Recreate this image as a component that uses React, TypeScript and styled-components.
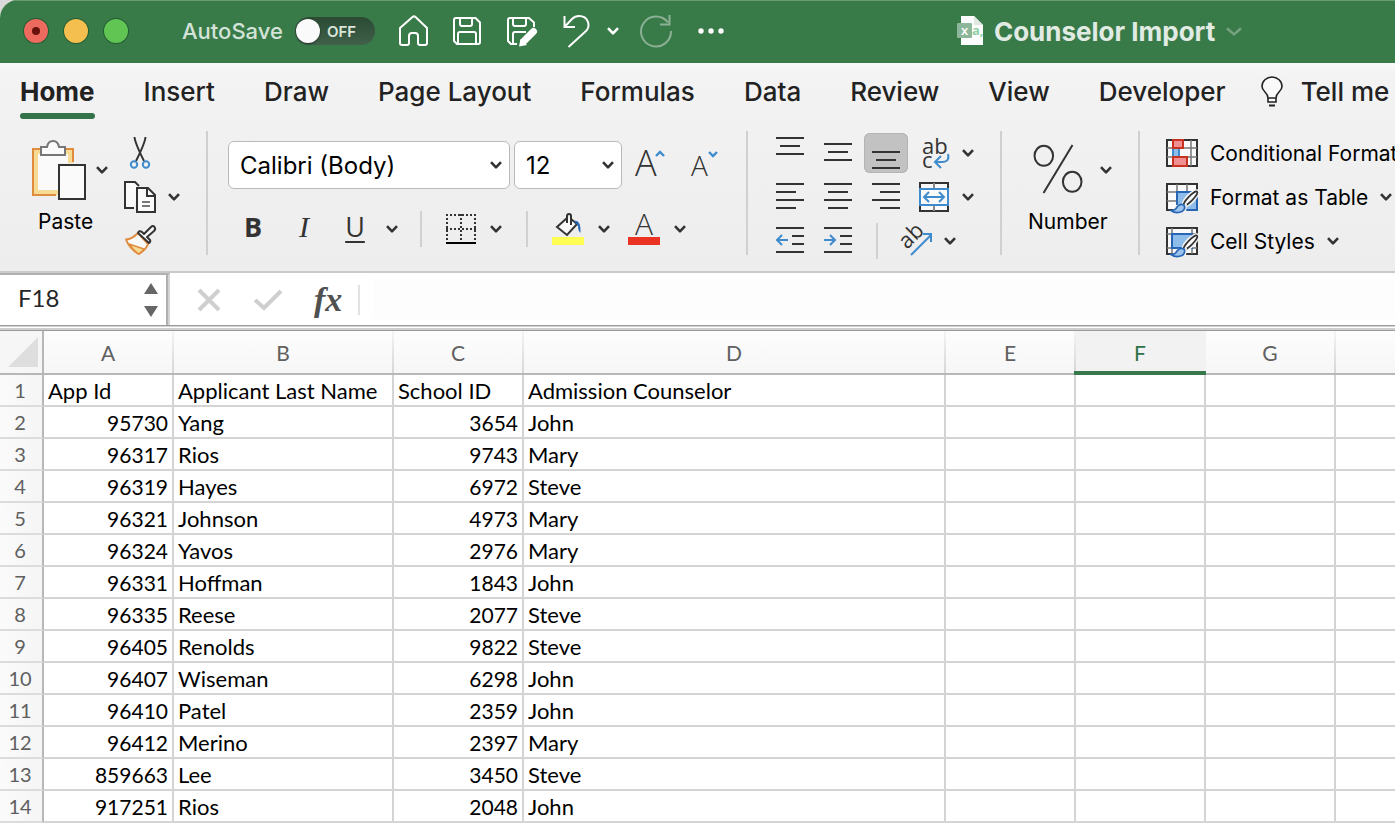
import React from "react";
import styled, { createGlobalStyle, css } from "styled-components";

const ui = `Inter, "Liberation Sans", sans-serif`;
const sheet = `Lato, "Open Sans", sans-serif`;
const ink = "#333333";
const blue = "#3e8bcd";

const GlobalStyle = createGlobalStyle`
  * { box-sizing: border-box; }
  body { margin: 0; background: #d9d9d9; font-family: ${ui}; color: #222; overflow: hidden; }
  button { border: 0; padding: 0; margin: 0; background: none; font: inherit; color: inherit; }
  svg { display: block; flex: none; overflow: visible; }
`;

const Window = styled.div`
  min-height: 100vh;
  background: #fff;
  border-top-left-radius: 18px;
  overflow: hidden;
`;

/* Title bar */
const TitleBar = styled.header`
  display: flex;
  align-items: center;
  height: 63px;
  padding: 0 0 2px 24px;
  background: #397a49;
  border-top: 1px solid #6a9b75;
  color: #fff;
  white-space: nowrap;
`;
const Lights = styled.div`
  display: flex;
  gap: 16px;
  margin-right: 54px;
`;
const Light = styled.button<{ $color: string }>`
  display: grid;
  place-items: center;
  width: 24px;
  height: 24px;
  border-radius: 50%;
  background: ${(p) => p.$color};
  box-shadow: 0 0 0 1px rgba(20, 70, 35, 0.55);
`;
const UnsavedDot = styled.span`
  width: 8px;
  height: 8px;
  border-radius: 50%;
  background: #69120d;
`;
const AutoSave = styled.label`
  display: flex;
  align-items: center;
  gap: 12px;
  margin-right: 24px;
  font-size: 22px;
  font-weight: 500;
  color: #d3e3d7;
`;
const Switch = styled.span`
  position: relative;
  display: flex;
  align-items: center;
  width: 80px;
  height: 28px;
  padding-left: 32px;
  border-radius: 14px;
  background: linear-gradient(#2b4a34, #40604a);
  font-size: 15px;
  font-weight: 600;
  color: #dbe6dd;
`;
const SwitchInput = styled.input`
  position: absolute;
  inset: 0;
  width: 100%;
  height: 100%;
  margin: 0;
  opacity: 0;
`;
const Knob = styled.span`
  position: absolute;
  left: 1px;
  top: 2px;
  width: 24px;
  height: 24px;
  border-radius: 50%;
  background: #fafafa;
  box-shadow: 0 1px 2px rgba(0, 0, 0, 0.5);
`;
const QuickTools = styled.div`
  display: flex;
  align-items: center;
  gap: 24px;
`;
const ToolButton = styled.button`
  display: flex;
  align-items: center;
  justify-content: center;
`;
const UndoSplit = styled.div`
  display: flex;
  align-items: center;
  gap: 16px;
  margin-right: -4px;
`;
const DocTitle = styled.div`
  display: flex;
  align-items: center;
  gap: 11px;
  margin-left: 232px;
  font-size: 26px;
  font-weight: 700;
  color: #e1ebe3;
`;

/* Ribbon */
const RibbonArea = styled.section`
  height: 210px;
  background: linear-gradient(#f8f8f8, #f3f3f3 10px, #ededed);
  border-bottom: 2px solid #c9c9c9;
  overflow: hidden;
`;
const Tabs = styled.nav`
  display: flex;
  align-items: flex-start;
  height: 68px;
  padding: 11px 0 0 20px;
  gap: 48px;
  white-space: nowrap;
`;
const Tab = styled.button<{ $active?: boolean }>`
  height: 45px;
  flex: none;
  padding: 0 1px 0 0;
  font-size: 26px;
  line-height: 36px;
  font-weight: ${(p) => (p.$active ? 700 : 500)};
  display: flex;
  flex-direction: column;
  gap: 3px;
  &::after {
    content: "";
    width: 100%;
    height: 6px;
    border-radius: 3px;
    background: ${(p) => (p.$active ? "#33734a" : "transparent")};
  }
`;
const TellMe = styled.button`
  display: flex;
  flex: none;
  align-items: center;
  gap: 18px;
  margin-left: -14px;
  font-size: 26px;
  line-height: 36px;
  font-weight: 500;
`;
const Ribbon = styled.div`
  display: flex;
  align-items: flex-start;
  height: 132px;
  white-space: nowrap;
  font-size: 21px;
  color: #000;
`;
const Divider = styled.div<{ $small?: boolean }>`
  flex: none;
  width: 2px;
  height: ${(p) => (p.$small ? 36 : 124)}px;
  background: #d0d0d0;
`;
const Group = styled.div<{ $left: number; $right: number }>`
  flex: none;
  display: flex;
  padding: 0 ${(p) => p.$right}px 0 ${(p) => p.$left}px;
`;
const Rows = styled.div`
  display: flex;
  flex-direction: column;
  gap: 4px;
  padding-top: 2px;
`;
const Row = styled.div`
  display: flex;
  align-items: center;
  gap: 4px;
  height: 40px;
`;
const BigButton = styled.button<{ $width: number }>`
  display: flex;
  flex-direction: column;
  align-items: flex-start;
  width: ${(p) => p.$width}px;
  line-height: 26px;
`;
const BigTop = styled.span<{ $gap: number; $indent?: number }>`
  display: flex;
  align-items: center;
  gap: ${(p) => p.$gap}px;
  height: 78px;
  padding-left: ${(p) => p.$indent ?? 0}px;
`;
const BigLabel = styled.span<{ $indent?: number }>`
  padding-left: ${(p) => p.$indent ?? 0}px;
`;
const IconButton = styled.button<{ $on?: boolean }>`
  display: grid;
  place-items: center;
  width: 44px;
  height: 40px;
  border-radius: 6px;
  ${(p) =>
    p.$on &&
    css`
      background: #c2c2c2;
      box-shadow: inset 0 0 0 1px #b4b4b4;
    `}
`;
const ArrowButton = styled.button`
  display: grid;
  place-items: center;
  width: 16px;
  height: 40px;
`;
const FontGroup = styled.div`
  display: flex;
  flex: none;
  flex-direction: column;
  gap: 22px;
  width: 538px;
  padding: 10px 0 0 20px;
`;
const FontRow = styled.div`
  display: flex;
  align-items: center;
  gap: 4px;
`;
const SelectWrap = styled.label<{ $width: number }>`
  display: grid;
  align-items: center;
  width: ${(p) => p.$width}px;
  height: 48px;
  & > * { grid-area: 1 / 1; }
  & > svg { justify-self: end; margin-right: 8px; pointer-events: none; }
`;
const Select = styled.select`
  appearance: none;
  width: 100%;
  height: 48px;
  padding: 0 11px;
  border: 1px solid #b9b9b9;
  border-radius: 6px;
  background: #fff;
  font-family: ${ui};
  font-size: 24px;
  color: #000;
`;
const GrowButtons = styled.div`
  display: flex;
  gap: 24px;
  margin-left: 8px;
`;
const FormatRow = styled.div`
  display: flex;
  align-items: center;
  height: 36px;
`;
const Letter = styled.button<{ $kind: "b" | "i" | "u" }>`
  width: 52px;
  height: 36px;
  padding-bottom: 4px;
  font-family: "Open Sans", sans-serif;
  font-size: 27px;
  line-height: 32px;
  color: ${ink};
  ${(p) => p.$kind === "b" && css`font-weight: 700; width: 50px;`}
  ${(p) => p.$kind === "i" && css`font-family: "Liberation Serif", serif; font-style: italic; font-size: 30px;`}
  ${(p) => p.$kind === "u" && css`text-decoration: underline; text-decoration-thickness: 2px; text-underline-offset: 4px; width: 50px;`}
`;
const FormatSplit = styled.div<{ $left: number; $gap?: number }>`
  display: flex;
  align-items: center;
  gap: ${(p) => p.$gap ?? 12}px;
  margin-left: ${(p) => p.$left}px;
`;
const StyleButton = styled.button`
  display: flex;
  align-items: center;
  gap: 12px;
  height: 40px;
`;

/* Formula bar */
const FormulaBar = styled.div`
  display: flex;
  height: 52px;
  background: #fff;
`;
const NameBox = styled.div`
  display: flex;
  align-items: center;
  width: 170px;
  height: 52px;
  border-top: 2px solid #b0b0b0;
  border-right: 2px solid #d4d4d4;
  box-shadow: inset -2px 0 0 #b0b0b0;
`;
const NameInput = styled.input`
  width: 144px;
  padding: 0 0 6px 18px;
  border: 0;
  outline: 0;
  background: transparent;
  font-family: ${sheet};
  font-size: 24px;
  color: #262626;
`;
const FormulaTools = styled.div`
  display: flex;
  align-items: center;
  gap: 31px;
  padding: 2px 0 0 26px;
`;
const Fx = styled.button`
  font-family: "Liberation Serif", serif;
  font-style: italic;
  font-weight: 700;
  font-size: 34px;
  line-height: 40px;
  color: #505050;
`;
const FormulaEdge = styled.div`
  width: 2px;
  height: 30px;
  margin: 12px 13px 0 16px;
  background: #e2e2e2;
`;
const FormulaInput = styled.input`
  flex: 1;
  min-width: 0;
  margin: 6px 0;
  border: 0;
  outline: 0;
  background: #fdfdfd;
  font-family: ${sheet};
  font-size: 24px;
`;
const Splitter = styled.div`
  height: 6px;
  border-top: 1px solid #9b9b9b;
  border-bottom: 1px solid #9b9b9b;
  background: linear-gradient(#d4d4d4 1px, #fff 1px, #fff 2px, #cfcfcf 2px);
`;

/* Grid */
const Grid = styled.table`
  width: 100%;
  table-layout: fixed;
  border-collapse: separate;
  border-spacing: 0;
  font-family: ${sheet};
  font-size: 22px;
  line-height: 28px;
  color: #000;
`;
const Col = styled.col<{ $width?: number }>`
  width: ${(p) => (p.$width ? `${p.$width}px` : "auto")};
`;
const Corner = styled.td`
  height: 44px;
  padding: 0 4px 0 8px;
  border-right: 2px solid #b7b7b7;
  border-bottom: 2px solid #b7b7b7;
  background: #f6f6f6;
`;
const ColHead = styled.th<{ $active?: boolean }>`
  position: relative;
  height: 44px;
  padding: 0 2px 0 0;
  font-size: 21px;
  font-weight: 400;
  color: #606060;
  background:
    linear-gradient(#b7b7b7, #b7b7b7) bottom / 100% 2px no-repeat,
    linear-gradient(#f4f4f4, #d4d4d4) right / 2px 100% no-repeat,
    linear-gradient(#fdfdfd, #f6f6f6);
  &:last-child {
    background:
      linear-gradient(#b7b7b7, #b7b7b7) bottom / 100% 2px no-repeat,
      linear-gradient(#fdfdfd, #f6f6f6);
  }
  ${(p) =>
    p.$active &&
    css`
      color: #2f7147;
      background: #f2f2f2;
      &::after {
        content: "";
        position: absolute;
        left: -2px;
        right: 0;
        bottom: 0;
        height: 4px;
        background: #38764c;
      }
    `}
`;
const RowHead = styled.th`
  height: 32px;
  padding: 0 2px 0 0;
  font-size: 20px;
  font-weight: 400;
  color: #606060;
  background: linear-gradient(90deg, #fbfbfb, #f5f5f5);
  border-right: 2px solid #b7b7b7;
  border-bottom: 2px solid #dcdcdc;
`;
const Cell = styled.td<{ $num?: boolean }>`
  height: 32px;
  padding: 2px 4px 0;
  font-size: ${(p) => (p.$num ? 21 : 22)}px;
  text-align: ${(p) => (p.$num ? "right" : "left")};
  border-right: 2px solid #d4d4d4;
  border-bottom: 2px solid #d4d4d4;
  background: #fff;
  white-space: nowrap;
  &:last-child { border-right: 0; }
`;

const Chevron = ({ color = ink, w = 12, h = 8, sw = 2.6 }) => (
  <svg width={w} height={h} viewBox={`0 0 ${w} ${h}`} fill="none" stroke={color} strokeWidth={sw}>
    <path d={`M1 1.2L${w / 2} ${h - 1.6}L${w - 1} 1.2`} strokeLinejoin="round" />
  </svg>
);

type Line = [number, number, number];
const Lines = ({ lines, arrow }: { lines: Line[]; arrow?: "left" | "right" }) => (
  <svg width="44" height="40" fill="none" stroke={ink} strokeWidth="2">
    {lines.map(([x1, x2, y]) => (
      <path key={y} d={`M${x1} ${y}H${x2}`} />
    ))}
    {arrow === "left" && <path d="M20 19H9M14 14L9 19L14 24" stroke={blue} />}
    {arrow === "right" && <path d="M8 19H19M14 14L19 19L14 24" stroke={blue} />}
  </svg>
);

const HomeIcon = () => (
  <svg width="30" height="32" viewBox="0 0 30 32" fill="none" stroke="#fff" strokeWidth="2" strokeLinejoin="round">
    <path d="M1 13L13.500 2Q15 0.800 16.500 2L28 13V28Q28 30 26 30H21Q19 30 19 28V21Q19 18 16 18H13Q10 18 10 21V28Q10 30 8 30H3Q1 30 1 28Z" />
  </svg>
);
const SaveIcon = ({ edit = false }) => (
  <svg width={edit ? 32 : 30} height="32" viewBox={edit ? "0 0 32 32" : "0 0 30 32"} fill="none" stroke="#fff" strokeWidth="2" strokeLinejoin="round">
    {edit ? (
      <>
        <path d="M10 29H4L1 26V5Q1 3 3 3H22L27 7.500V12" />
        <path d="M6 3V9Q6 11 8 11H17Q19 11 19 9V3M6 29V19Q6 17 8 17H19" />
        <path d="M17 26L26.500 16.500" strokeWidth="7" strokeLinecap="round" />
        <path d="M12 31.500L13.500 24L20 30Z" fill="#fff" stroke="none" />
      </>
    ) : (
      <>
        <path d="M3 3H22.500L27 7.500V27Q27 29 25 29H4L1 26V5Q1 3 3 3Z" />
        <path d="M7 3V9Q7 11 9 11H17Q19 11 19 9V3M5 29V19Q5 17 7 17H21Q23 17 23 19V29" />
      </>
    )}
  </svg>
);
const UndoIcon = () => (
  <svg width="28" height="34" viewBox="0 0 28 34" fill="none" stroke="#fff" strokeWidth="2">
    <path d="M1.500 2V13H12M1.500 13L9 5Q12 2 16 2C25 2 28.500 12 22.500 17.500L5.500 33" />
  </svg>
);
const RedoIcon = () => (
  <svg width="34" height="34" viewBox="0 0 34 34" fill="none" stroke="#8cb195" strokeWidth="2">
    <path d="M32 17A15 15 0 1 1 29 8.500M30.500 1V10.500H21" />
  </svg>
);
const Dots = () => (
  <svg width="28" height="6" fill="#fff">
    <circle cx="4" cy="3" r="2.700" />
    <circle cx="14" cy="3" r="2.700" />
    <circle cx="24" cy="3" r="2.700" />
  </svg>
);
const FileIcon = () => (
  <svg width="26" height="30" viewBox="0 0 26 30">
    <path d="M4 0H17L26 9V29H4Z" fill="#fdfdfd" />
    <path d="M17 0V9H26Z" fill="#dfe8e1" />
    <rect y="7" width="15" height="15" rx="1" fill="#8db79a" />
    <text x="4" y="19" fontFamily="Open Sans" fontSize="13" fontWeight="600" fill="#fff">x</text>
    <text x="15" y="19" fontFamily="Open Sans" fontSize="13" fill="#8fd0a6">a,</text>
  </svg>
);
const BulbIcon = () => (
  <svg width="22" height="32" viewBox="0 0 22 32" fill="none" stroke="#222" strokeWidth="1.600">
    <path d="M7 22Q7 19 4 16Q1 13 1 10.500A10 9.500 0 0 1 21 10.500Q21 13 18 16Q15 19 15 22V26H7ZM7 22H15" fill="#fafafa" />
    <path d="M8 29.500H14" strokeWidth="2" />
  </svg>
);
const PasteIcon = () => (
  <svg width="54" height="62" viewBox="0 0 54 62" fill="none" strokeWidth="2">
    <path d="M2 10H42V24H27V56H2Z" fill="#f5db94" stroke="none" />
    <path d="M7 15H37V24H27V51H7Z" fill="#fafafa" />
    <path d="M42 23V10H2V56H25" stroke="#e08c3e" />
    <path d="M10 8H16Q17 2 22 2Q27 2 28 8H34V16H10Z" fill="#fafafa" stroke="#767676" />
    <path d="M28 26H54V60H28Z" fill="#fafafa" stroke={ink} />
  </svg>
);
const CutIcon = () => (
  <svg width="32" height="32" viewBox="0 0 32 32" fill="none" strokeWidth="2">
    <path d="M10.500 0Q11 6 20 24M21.500 0Q21 6 12 24" stroke={ink} />
    <circle cx="10" cy="27.500" r="3.200" stroke={blue} />
    <circle cx="22" cy="27.500" r="3.200" stroke={blue} />
  </svg>
);
const CopyIcon = () => (
  <svg width="32" height="32" viewBox="0 0 32 32" fill="none" stroke={ink} strokeWidth="2">
    <path d="M10 27H1V1H11L15 5" fill="#fafafa" />
    <path d="M13 7H24L31 14V31H13Z" fill="#fafafa" />
    <path d="M23 7V15H31" />
    <path d="M18 21H26M18 25H26" stroke="#777" />
  </svg>
);
const BrushIcon = () => (
  <svg width="32" height="32" viewBox="0 0 32 32" fill="none" strokeWidth="2" strokeLinejoin="round">
    <path d="M2 14.500Q8 14 14 8L24 19Q22 25 14.500 29Q5 23 2 14.500Z" fill="#fafafa" stroke="#e08c3e" />
    <path d="M5 19L20 24Q18 27 14.500 29Q9 25 5 19Z" fill="#f5db94" stroke="#e08c3e" strokeWidth="1.500" />
    <path d="M14 8Q15 5 18 7L20 9L27 2Q29 0 30.500 2Q32 4 30 6L23 12L26 15Q27 17 25 18Z" fill="#fafafa" stroke={ink} />
  </svg>
);
const GrowIcon = ({ down = false }) => (
  <svg width="32" height="32" viewBox="0 0 32 32" fill="none">
    <text x="1" y={27} fontFamily="Open Sans" fontSize={down ? 28 : 36} fontWeight="300" fill={ink}>A</text>
    <path d={down ? "M19 3L23 7L27 3" : "M22 7L26 3L30 7"} stroke={blue} strokeWidth="2.400" />
  </svg>
);
const BordersIcon = () => (
  <svg width="30" height="30" viewBox="0 0 30 30" fill="none" stroke={ink} strokeWidth="2">
    <path d="M0 1H30M1 0V28M29 0V28M15 0V28M0 15H30" strokeDasharray="2 2" />
    <path d="M0 29H30" stroke="#000" />
  </svg>
);
const FillIcon = () => (
  <svg width="32" height="32" viewBox="0 0 32 32" fill="none" stroke={ink} strokeWidth="2">
    <path d="M15 5L5 14L15 22L25 11L19 6" fill="#fafafa" />
    <path d="M15 10V3Q15 1 17 1Q19 1 19 3V12" />
    <path d="M22 8Q29 6 28.500 20Q26 18 26 13Z" fill="#2865b5" stroke="none" />
    <path d="M0 24H32V32H0Z" fill="#fffe54" stroke="none" />
  </svg>
);
const FontColorIcon = () => (
  <svg width="32" height="32" viewBox="0 0 32 32">
    <text x="16" y="22" textAnchor="middle" fontFamily="Open Sans" fontSize="30" fontWeight="300" fill={ink}>A</text>
    <path d="M0 24H32V32H0Z" fill="#eb3323" />
  </svg>
);
const WrapIcon = () => (
  <svg width="32" height="34" viewBox="0 0 32 34" fill="none" stroke={blue} strokeWidth="2">
    <text x="4" y="18" fontFamily="Open Sans" fontSize="22" fill={ink} stroke="none">ab</text>
    <text x="4" y="32" fontFamily="Open Sans" fontSize="22" fill={ink} stroke="none">c</text>
    <path d="M30 18Q32 26 24 26H17M23 20L17 26L23 32" />
  </svg>
);
const MergeIcon = () => (
  <svg width="30" height="30" viewBox="0 0 30 30" fill="none" stroke={ink} strokeWidth="2">
    <path d="M1 1H29V29H1Z" fill="#fafafa" />
    <path d="M15 1V7M15 23V29" stroke="#888" />
    <path d="M1 7H29V23H1Z" fill="#fafafa" stroke={blue} />
    <path d="M5 15H25M10 10L5 15L10 20M20 10L25 15L20 20" stroke={blue} />
  </svg>
);
const OrientIcon = () => (
  <svg width="34" height="34" viewBox="0 0 34 34" fill="none">
    <text transform="translate(8 26) rotate(-45)" fontFamily="Open Sans" fontSize="22" fill={ink}>ab</text>
    <path d="M12 31L32 11M24 10H32V18" stroke={blue} strokeWidth="2" />
  </svg>
);
const PercentIcon = () => (
  <svg width="52" height="50" viewBox="0 0 52 50" fill="none" stroke={ink} strokeWidth="2">
    <ellipse cx="11.800" cy="10.800" rx="9.300" ry="10" />
    <ellipse cx="40.200" cy="36.800" rx="9.300" ry="10" />
    <path d="M40.500 0L11.500 48" />
  </svg>
);
const TableBrush = () => (
  <>
    <g transform="rotate(-46 24.500 15.500)">
      <ellipse cx="24.500" cy="15.500" rx="12" ry="5" fill="#f3f3f3" />
      <ellipse cx="24.500" cy="15.500" rx="9.500" ry="2.400" fill="#fafafa" stroke={ink} strokeWidth="1.700" />
    </g>
    <path d="M3 29Q9 27 10 22L21 21L20 29Z" fill="#f3f3f3" />
    <path d="M5 27.500Q9.500 27.500 11 24Q14 20 18 22Q20 26 16 28.500Q10 31 5 27.500Z" fill="#9cc4ec" stroke="#2865b5" strokeWidth="1.700" />
  </>
);
const CondIcon = () => (
  <svg width="32" height="28" viewBox="0 0 32 28" fill="none" strokeWidth="2">
    <path d="M1 1H31V27H1Z" fill="#fafafa" stroke={ink} />
    <path d="M1 9H31M1 18H31M25 1V27" stroke="#777" strokeWidth="1.500" />
    <path d="M13 10H24V17H13Z" fill="#fafafa" />
    <path d="M7 9H13V18H7Z" fill="#8fbdea" stroke={blue} />
    <path d="M7 1H17V9H7ZM7 18H21V27H7Z" fill="#f09093" stroke="#c8321f" />
  </svg>
);
const FormatTableIcon = () => (
  <svg width="32" height="28" viewBox="0 0 32 28" fill="none" strokeWidth="2">
    <path d="M1 1H31V27H1Z" fill="#fafafa" stroke={ink} />
    <path d="M1 9H31M1 18H31M11 1V27M21 1V27" stroke="#777" strokeWidth="1.500" />
    <path d="M11 9H31V27H11Z" fill="#8fbdea" stroke="#2865b5" />
    <TableBrush />
  </svg>
);
const CellStylesIcon = () => (
  <svg width="32" height="28" viewBox="0 0 32 28" fill="none" strokeWidth="2">
    <path d="M1 1H31V27H1Z" fill="#fafafa" stroke={ink} />
    <path d="M1 7H31M1 21H31M6 1V27M26 1V27" stroke="#777" strokeWidth="1.500" />
    <path d="M6 7H26V21H6Z" fill="#8fbdea" stroke="#2865b5" />
    <TableBrush />
  </svg>
);

const tabs = ["Home", "Insert", "Draw", "Page Layout", "Formulas", "Data", "Review", "View", "Developer"];
const columns: [string, number?][] = [["A", 130], ["B", 220], ["C", 130], ["D", 422], ["E", 130], ["F", 130], ["G", 130], [""]];
const header = ["App Id", "Applicant Last Name", "School ID", "Admission Counselor"];
const records = [
  ["95730", "Yang", "3654", "John"],
  ["96317", "Rios", "9743", "Mary"],
  ["96319", "Hayes", "6972", "Steve"],
  ["96321", "Johnson", "4973", "Mary"],
  ["96324", "Yavos", "2976", "Mary"],
  ["96331", "Hoffman", "1843", "John"],
  ["96335", "Reese", "2077", "Steve"],
  ["96405", "Renolds", "9822", "Steve"],
  ["96407", "Wiseman", "6298", "John"],
  ["96410", "Patel", "2359", "John"],
  ["96412", "Merino", "2397", "Mary"],
  ["859663", "Lee", "3450", "Steve"],
  ["917251", "Rios", "2048", "John"],
];

const Arrow = ({ label }: { label: string }) => (
  <ArrowButton aria-label={label}>
    <Chevron />
  </ArrowButton>
);

export default function App() {
  return (
    <Window>
      <GlobalStyle />
      <TitleBar>
        <Lights>
          <Light $color="#ed6a5f" aria-label="Close"><UnsavedDot /></Light>
          <Light $color="#f5bf4f" aria-label="Minimize" />
          <Light $color="#61c554" aria-label="Zoom" />
        </Lights>
        <AutoSave>
          AutoSave
          <Switch>
            <SwitchInput type="checkbox" />
            <Knob />
            OFF
          </Switch>
        </AutoSave>
        <QuickTools>
          <ToolButton aria-label="Home"><HomeIcon /></ToolButton>
          <ToolButton aria-label="Save"><SaveIcon /></ToolButton>
          <ToolButton aria-label="Save as"><SaveIcon edit /></ToolButton>
          <UndoSplit>
            <ToolButton aria-label="Undo"><UndoIcon /></ToolButton>
            <ToolButton aria-label="Undo history"><Chevron color="#fff" /></ToolButton>
          </UndoSplit>
          <ToolButton aria-label="Redo"><RedoIcon /></ToolButton>
          <ToolButton aria-label="More"><Dots /></ToolButton>
        </QuickTools>
        <DocTitle>
          <FileIcon />
          Counselor Import
          <Chevron color="#75a37f" w={16} h={9} />
        </DocTitle>
      </TitleBar>

      <RibbonArea>
        <Tabs>
          {tabs.map((t) => (
            <Tab key={t} $active={t === "Home"}>{t}</Tab>
          ))}
          <TellMe><BulbIcon />Tell me</TellMe>
        </Tabs>
        <Ribbon>
          <Group $left={31} $right={24}>
            <BigButton $width={87}>
              <BigTop $gap={11}>
                <PasteIcon />
                <Chevron />
              </BigTop>
              <BigLabel $indent={7}>Paste</BigLabel>
            </BigButton>
            <Rows>
              <Row><IconButton aria-label="Cut"><CutIcon /></IconButton></Row>
              <Row><IconButton aria-label="Copy"><CopyIcon /></IconButton><Arrow label="Copy options" /></Row>
              <Row><IconButton aria-label="Format painter"><BrushIcon /></IconButton></Row>
            </Rows>
          </Group>
          <Divider />
          <FontGroup>
            <FontRow>
              <SelectWrap $width={282}>
                <Select aria-label="Font"><option>Calibri (Body)</option></Select>
                <Chevron />
              </SelectWrap>
              <SelectWrap $width={108}>
                <Select aria-label="Font size"><option>12</option></Select>
                <Chevron />
              </SelectWrap>
              <GrowButtons>
                <ToolButton aria-label="Increase font size"><GrowIcon /></ToolButton>
                <ToolButton aria-label="Decrease font size"><GrowIcon down /></ToolButton>
              </GrowButtons>
            </FontRow>
            <FormatRow>
              <Letter $kind="b">B</Letter>
              <Letter $kind="i">I</Letter>
              <Letter $kind="u">U</Letter>
              <FormatSplit $left={4}>
                <Arrow label="Underline options" />
              </FormatSplit>
              <FormatSplit $left={20}>
                <Divider $small />
              </FormatSplit>
              <FormatSplit $left={24}>
                <ToolButton aria-label="Borders"><BordersIcon /></ToolButton>
                <Arrow label="Border options" />
              </FormatSplit>
              <FormatSplit $left={22}>
                <Divider $small />
              </FormatSplit>
              <FormatSplit $left={24}>
                <ToolButton aria-label="Fill colour"><FillIcon /></ToolButton>
                <Arrow label="Fill colour options" />
              </FormatSplit>
              <FormatSplit $left={16}>
                <ToolButton aria-label="Font colour"><FontColorIcon /></ToolButton>
                <Arrow label="Font colour options" />
              </FormatSplit>
            </FormatRow>
          </FontGroup>
          <Divider />
          <Group $left={20} $right={24}>
            <Rows>
              <Row>
                <IconButton aria-label="Top align"><Lines lines={[[8, 36, 5], [12, 32, 13], [8, 36, 21]]} /></IconButton>
                <IconButton aria-label="Middle align"><Lines lines={[[8, 36, 11], [12, 32, 19], [8, 36, 27]]} /></IconButton>
                <IconButton $on aria-label="Bottom align"><Lines lines={[[8, 36, 19], [12, 32, 27], [8, 36, 35]]} /></IconButton>
                <IconButton aria-label="Wrap text"><WrapIcon /></IconButton>
                <Arrow label="Wrap options" />
              </Row>
              <Row>
                <IconButton aria-label="Align left"><Lines lines={[[8, 36, 7], [8, 28, 15], [8, 36, 23], [8, 28, 31]]} /></IconButton>
                <IconButton aria-label="Center"><Lines lines={[[8, 36, 7], [12, 32, 15], [8, 36, 23], [12, 32, 31]]} /></IconButton>
                <IconButton aria-label="Align right"><Lines lines={[[8, 36, 7], [16, 36, 15], [8, 36, 23], [16, 36, 31]]} /></IconButton>
                <IconButton aria-label="Merge and center"><MergeIcon /></IconButton>
                <Arrow label="Merge options" />
              </Row>
              <Row>
                <IconButton aria-label="Decrease indent"><Lines arrow="left" lines={[[8, 36, 7], [24, 36, 15], [24, 36, 23], [8, 36, 31]]} /></IconButton>
                <IconButton aria-label="Increase indent"><Lines arrow="right" lines={[[8, 36, 7], [24, 36, 15], [24, 36, 23], [8, 36, 31]]} /></IconButton>
                <FormatSplit $left={12} $gap={16}>
                  <Divider $small />
                  <IconButton aria-label="Orientation"><OrientIcon /></IconButton>
                </FormatSplit>
                <Arrow label="Orientation options" />
              </Row>
            </Rows>
          </Group>
          <Divider />
          <Group $left={26} $right={26}>
            <BigButton $width={84}>
              <BigTop $gap={16} $indent={4}>
                <PercentIcon />
                <Chevron />
              </BigTop>
              <BigLabel>Number</BigLabel>
            </BigButton>
          </Group>
          <Divider />
          <Group $left={26} $right={0}>
            <Rows>
              <StyleButton><CondIcon />Conditional Formatting<Chevron /></StyleButton>
              <StyleButton><FormatTableIcon />Format as Table<Chevron /></StyleButton>
              <StyleButton><CellStylesIcon />Cell Styles<Chevron /></StyleButton>
            </Rows>
          </Group>
        </Ribbon>
      </RibbonArea>

      <FormulaBar>
        <NameBox>
          <NameInput aria-label="Name box" defaultValue="F18" />
          <svg width="14" height="34" fill="#666"><path d="M0 11L7 0L14 11ZM0 23H14L7 34Z" /></svg>
        </NameBox>
        <FormulaTools>
          <ToolButton aria-label="Cancel">
            <svg width="26" height="26" stroke="#cfcfcf" strokeWidth="4"><path d="M3 3L23 23M23 3L3 23" /></svg>
          </ToolButton>
          <ToolButton aria-label="Enter">
            <svg width="30" height="24" fill="none" stroke="#cfcfcf" strokeWidth="4"><path d="M2 12L11 20L28 3" /></svg>
          </ToolButton>
          <Fx aria-label="Insert function">fx</Fx>
        </FormulaTools>
        <FormulaEdge />
        <FormulaInput aria-label="Formula" />
      </FormulaBar>
      <Splitter />

      <Grid>
        <colgroup>
          <Col $width={44} />
          {columns.map(([name, width]) => (
            <Col key={name} $width={width} />
          ))}
        </colgroup>
        <thead>
          <tr>
            <Corner><svg width="30" height="30"><path d="M30 0V30H0Z" fill="#dedede" /></svg></Corner>
            {columns.map(([name]) => (
              <ColHead key={name} $active={name === "F"} scope="col">{name}</ColHead>
            ))}
          </tr>
        </thead>
        <tbody>
          {[header, ...records].map((row, r) => (
            <tr key={r}>
              <RowHead scope="row">{r + 1}</RowHead>
              {columns.map(([name], c) => (
                <Cell key={name} $num={r > 0 && (c === 0 || c === 2)}>{row[c]}</Cell>
              ))}
            </tr>
          ))}
        </tbody>
      </Grid>
    </Window>
  );
}
